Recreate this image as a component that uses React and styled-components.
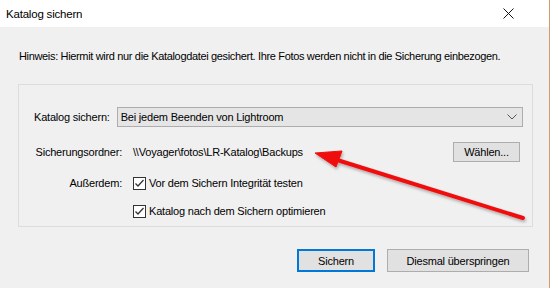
import styled, { createGlobalStyle } from 'styled-components';

const GlobalStyle = createGlobalStyle`
  html, body {
    margin: 0;
    padding: 0;
    background: #ffffff;
  }
  body {
    font-family: "Liberation Sans", Arial, sans-serif;
    font-size: 11px;
    letter-spacing: -0.2px;
    color: #000;
  }
`;

const Window = styled.div`
  position: relative;
  width: 549px;
  height: 288px;
  display: flex;
  flex-direction: column;
  border-right: 1px solid #cf9b74;
  box-sizing: content-box;
  overflow: hidden;
`;

const TitleBar = styled.div`
  height: 27px;
  background: #ffffff;
  display: flex;
  align-items: center;
  justify-content: space-between;
  padding: 0 0 0 6px;
  font-size: 11.5px;
`;

const CloseButton = styled.div`
  width: 82px;
  height: 27px;
  display: flex;
  align-items: center;
  justify-content: center;
`;

const Body = styled.div`
  flex: 1;
  background: #f0f0f0;
  padding: 22px 16px 0 18px;
  display: flex;
  flex-direction: column;
`;

const Hint = styled.div`
  padding-left: 1px;
  line-height: 14px;
  white-space: nowrap;
  letter-spacing: -0.34px;
`;

const GroupBox = styled.div`
  margin-top: 21px;
  height: 143px;
  border: 1px solid #dcdcdc;
  box-sizing: border-box;
  padding: 22px 9px 0 15px;
  display: flex;
  flex-direction: column;
`;

const SelectRow = styled.div`
  display: flex;
  align-items: center;
  gap: 7px;
`;

const Select = styled.div`
  flex: 1;
  height: 20px;
  box-sizing: border-box;
  border: 1px solid #adadad;
  background: #e5e5e5;
  display: flex;
  align-items: center;
  justify-content: space-between;
  padding: 0 5px 0 3px;
`;

const FieldGrid = styled.div`
  display: grid;
  grid-template-columns: 88px 1fr;
  grid-template-rows: 20px 14px 14px;
  column-gap: 11px;
  row-gap: 14px;
  align-items: center;
  margin-top: 15px;
`;

const Label = styled.div`
  display: flex;
  align-items: center;
  justify-content: flex-end;
  white-space: nowrap;
`;

const PathRow = styled.div`
  display: flex;
  align-items: center;
  justify-content: space-between;
  padding-right: 3px;
`;

const Button = styled.div`
  height: ${(p) => p.$h || 20}px;
  box-sizing: border-box;
  border: ${(p) => (p.$default ? '2px solid #0078d7' : '1px solid #adadad')};
  background: #e1e1e1;
  display: flex;
  align-items: center;
  justify-content: center;
  padding: 0 ${(p) => p.$pad || 10}px;
  min-width: ${(p) => p.$min || 0}px;
`;

const CheckRow = styled.label`
  display: flex;
  align-items: center;
  gap: 3px;
`;

const Box = styled.span`
  width: 13px;
  height: 13px;
  box-sizing: border-box;
  border: 1px solid #333333;
  background: #ffffff;
  display: flex;
  align-items: center;
  justify-content: center;
`;

const Footer = styled.div`
  display: flex;
  justify-content: flex-end;
  gap: 12px;
  margin-top: 22px;
  padding-right: 4px;
`;

const ArrowLayer = styled.svg`
  position: absolute;
  left: 0;
  top: 0;
  pointer-events: none;
`;

const Check = () => (
  <Box>
    <svg width="11" height="11" viewBox="0 0 11 11">
      <path d="M1.5 5.5 L4 8 L9.5 2" fill="none" stroke="#333" strokeWidth="1.3" />
    </svg>
  </Box>
);

export default function App() {
  return (
    <>
      <GlobalStyle />
      <Window>
        <TitleBar>
          <span>Katalog sichern</span>
          <CloseButton>
            <svg width="11" height="11" viewBox="0 0 11 11">
              <path d="M0.5 0.5 L10.5 10.5 M10.5 0.5 L0.5 10.5" stroke="#111" strokeWidth="1" />
            </svg>
          </CloseButton>
        </TitleBar>
        <Body>
          <Hint>
            Hinweis: Hiermit wird nur die Katalogdatei gesichert. Ihre Fotos werden nicht in die Sicherung einbezogen.
          </Hint>
          <GroupBox>
            <SelectRow>
              <span>Katalog sichern:</span>
              <Select>
                <span>Bei jedem Beenden von Lightroom</span>
                <svg width="10" height="6" viewBox="0 0 10 6">
                  <path d="M0.5 0.5 L5 5 L9.5 0.5" fill="none" stroke="#555" strokeWidth="1" />
                </svg>
              </Select>
            </SelectRow>
            <FieldGrid>
              <Label>Sicherungsordner:</Label>
              <PathRow>
                <span>\\Voyager\fotos\LR-Katalog\Backups</span>
                <Button $min={67}>Wählen...</Button>
              </PathRow>
              <Label>Außerdem:</Label>
              <CheckRow>
                <Check />
                <span>Vor dem Sichern Integrität testen</span>
              </CheckRow>
              <span />
              <CheckRow>
                <Check />
                <span>Katalog nach dem Sichern optimieren</span>
              </CheckRow>
            </FieldGrid>
          </GroupBox>
          <Footer>
            <Button $default $h={23} $min={78}>Sichern</Button>
            <Button $h={23} $min={142}>Diesmal überspringen</Button>
          </Footer>
        </Body>
        <ArrowLayer width="551" height="288" viewBox="0 0 551 288">
          <defs>
            <filter id="sh" x="-10%" y="-30%" width="130%" height="180%">
              <feDropShadow dx="1" dy="2" stdDeviation="1.5" floodColor="#000" floodOpacity="0.3" />
            </filter>
          </defs>
          <g filter="url(#sh)" fill="#f00d0d" stroke="#f00d0d">
            <line x1="334" y1="159" x2="523" y2="218" strokeWidth="4" strokeLinecap="round" />
            <polygon points="315,153 342,151 336,167" strokeWidth="1" strokeLinejoin="round" />
          </g>
        </ArrowLayer>
      </Window>
    </>
  );
}
